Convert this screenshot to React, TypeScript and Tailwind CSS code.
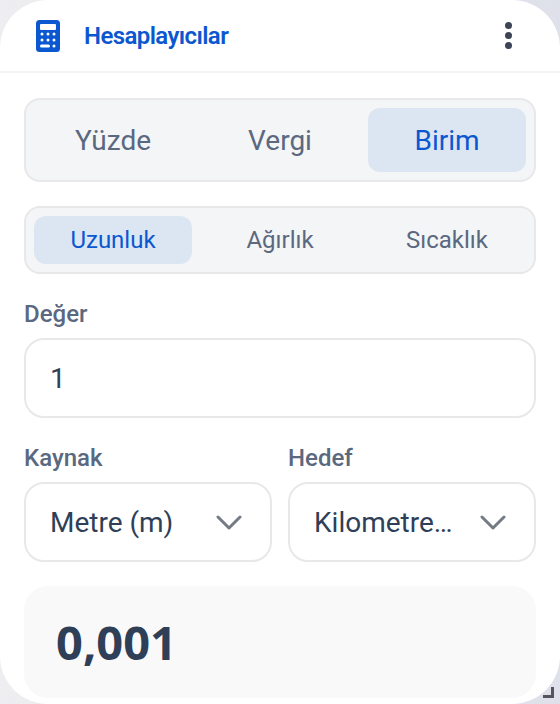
import React from "react";

const Tab = ({ label, active, big }: { label: string; active?: boolean; big?: boolean }) => (
  <div
    className={`flex flex-1 items-center justify-center rounded-[12px] ${big ? "pt-[2px] text-[28px]" : "text-[24px]"} ${
      active ? "bg-[#dce6f3] text-[#0b57d0]" : "text-[#5a6880]"
    }`}
  >
    {label}
  </div>
);

const Chevron = () => (
  <svg width="26" height="16" viewBox="0 0 26 16" fill="none" className="shrink-0">
    <path d="M2 3l11 11L24 3" stroke="#757b85" strokeWidth="3" strokeLinecap="round" strokeLinejoin="round" />
  </svg>
);

const Select = ({ label, value }: { label: string; value: string }) => (
  <div className="flex min-w-0 flex-1 flex-col gap-[17px]">
    <div className="h-[15px] text-[24px] leading-[17px] font-medium text-[#5a6880]">{label}</div>
    <div className="flex h-[80px] items-center gap-[22px] rounded-[20px] border-2 border-[#e8e8ea] bg-white pr-[28px] pl-[24px]">
      <span className="min-w-0 flex-1 truncate pt-[2px] text-[28px] text-[#2f3f57]">{value}</span>
      <Chevron />
    </div>
  </div>
);

export default function App() {
  return (
    <div
      className="relative h-[704px] w-[560px] overflow-hidden bg-linear-to-r from-[#eeeef1] to-[#dfe1ea]"
      style={{ fontFamily: "Roboto, sans-serif" }}
    >
      <div className="flex h-[704px] flex-col rounded-[48px] bg-white">
        <header className="flex h-[73px] shrink-0 items-center justify-between border-b-2 border-[#f2f3f4] pr-[48px] pl-[36px]">
          <div className="flex items-center gap-[24px]">
            <svg width="24" height="32" viewBox="0 0 24 32">
              <rect width="24" height="32" rx="3.5" fill="#0b57d0" />
              <rect x="4" y="4" width="16" height="6" rx="1" fill="#fff" />
              <g fill="#fff">
                <circle cx="6" cy="14" r="1.5" /><circle cx="12" cy="14" r="1.5" /><circle cx="18" cy="14" r="1.5" />
                <circle cx="6" cy="20" r="1.5" /><circle cx="12" cy="20" r="1.5" /><circle cx="18" cy="20" r="1.5" />
                <rect x="4" y="24.5" width="10" height="3" rx="1.5" /><circle cx="18" cy="26" r="1.5" />
              </g>
            </svg>
            <span className="text-[24px] font-semibold tracking-[-0.6px] text-[#0b57d0]">Hesaplayıcılar</span>
          </div>
          <div className="flex flex-col gap-[3px]">
            <span className="h-[7px] w-[7px] rounded-full bg-[#3c4456]" />
            <span className="h-[7px] w-[7px] rounded-full bg-[#3c4456]" />
            <span className="h-[7px] w-[7px] rounded-full bg-[#3c4456]" />
          </div>
        </header>
        <main className="flex flex-col px-[24px] pt-[25px]">
          <div className="flex h-[84px] gap-[9px] rounded-[16px] border-2 border-[#e8e8ea] bg-[#f4f5f6] p-[8px]">
            <Tab big label="Yüzde" />
            <Tab big label="Vergi" />
            <Tab big active label="Birim" />
          </div>
          <div className="mt-[24px] flex h-[68px] gap-[9px] rounded-[16px] border-2 border-[#e8e8ea] bg-[#f4f5f6] p-[8px]">
            <Tab active label="Uzunluk" />
            <Tab label="Ağırlık" />
            <Tab label="Sıcaklık" />
          </div>
          <div className="mt-[32px] h-[15px] text-[24px] leading-[17px] font-medium text-[#5a6880]">Değer</div>
          <div className="mt-[17px] flex h-[80px] items-center rounded-[20px] border-2 border-[#e8e8ea] bg-white pt-[2px] pl-[24px] text-[28px] text-[#2f3f57]">
            1
          </div>
          <div className="mt-[32px] flex gap-[16px]">
            <Select label="Kaynak" value="Metre (m)" />
            <Select label="Hedef" value="Kilometre (km)" />
          </div>
          <div className="mt-[24px] flex h-[112px] items-center rounded-[24px] bg-[#f9f9fa] pl-[32px]">
            <span className="text-[47px] font-bold text-[#2f3f57]" style={{ fontFamily: "'Noto Sans', sans-serif" }}>
              0,001
            </span>
          </div>
        </main>
      </div>
      <svg width="12" height="12" viewBox="0 0 12 12" className="absolute top-[687px] left-[543px]">
        <path d="M8 0h3v11H0V8h8z" fill="#55565c" />
      </svg>
    </div>
  );
}
